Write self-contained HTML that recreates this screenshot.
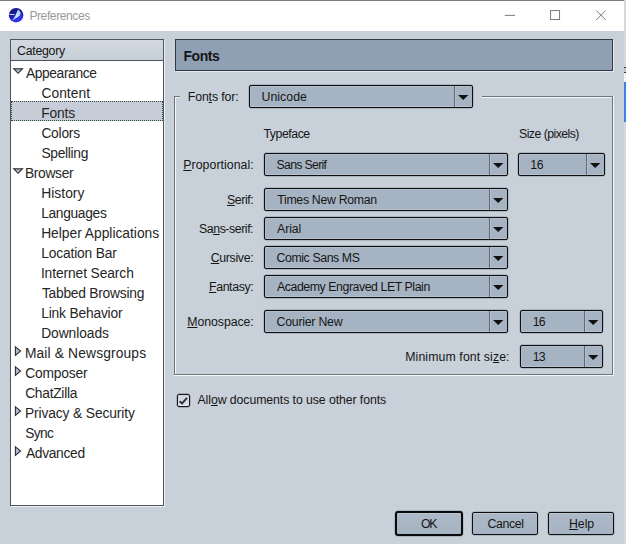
<!DOCTYPE html>
<html><head><meta charset="utf-8"><title>Preferences</title>
<style>
html,body{margin:0;padding:0}
body{width:626px;height:544px;overflow:hidden;background:#c8d0d9;position:relative;font-family:"Liberation Sans",sans-serif}
div,span,svg{position:absolute;box-sizing:border-box}
.t{white-space:pre;line-height:30px}
.t u{text-decoration:underline;text-underline-offset:0.5px;text-decoration-thickness:1px}
#topline{left:0;top:0;width:626px;height:1px;background:#7a7a7a}
#titlebar{left:0;top:1px;width:624px;height:30px;background:#fff}
#strip{left:624px;top:0;width:2px;height:544px;background:#d2d8e0}
#stripblue{left:624px;top:81.5px;width:2px;height:40.5px;background:#3f7fe6}
#tree{left:10px;top:39px;width:154px;height:467px;background:#fff;border:1px solid #4f545c;box-shadow:1px 1px 0 #eef1f4}
#cathead{left:1px;top:1px;width:152px;height:21px;background:linear-gradient(#d3d9e0,#c6ced7);border-bottom:1px solid #4f545c;left:0;top:0}
#sel{left:11px;top:101px;width:152px;height:20px;background:#c6cdd8;outline:1px dotted #2c4a36;outline-offset:-1px}
#hdrbox{left:175px;top:39px;width:438px;height:32px;background:#8fa0b4;border:1px solid #333a43;box-shadow:1px 1px 0 #e4e8ed}
.gb{background:#6e747c}
.gbl{background:#f4f6f8}
.dd{border:1px solid #0d0f13;border-radius:2px;background:#a6b3c2;box-shadow:inset 0 1px 0 #b3becb,inset 0 -1px 0 #b7c1cd,inset 1px 0 0 #b0bbc8,0 0 0 0.4px rgba(40,46,54,0.35)}
.dv{top:0;width:1px;height:100%;background:#5f6874}
.dv2{top:0;width:1px;height:100%;background:#b7c1cd}
.ar{overflow:visible}
.btn{border:1px solid #0d0f13;border-radius:2px;background:linear-gradient(#adb9c7,#a6b3c2);box-shadow:inset 0 1px 0 #bdc7d2,0 0 0 0.4px rgba(40,46,54,0.35)}
#ok{border:2px solid #090b0e;border-radius:3px}
#cb{left:177px;top:394px;width:13px;height:13px;border:1px solid #14171b;border-radius:2px;background:linear-gradient(#ccd3dc,#dde2e8);box-shadow:0 0 0 0.4px rgba(30,34,40,0.45)}
</style></head><body>
<div id="topline"></div>
<div id="titlebar"></div>
<div id="strip"></div><div style="left:624px;top:67px;width:2px;height:6px;background:#c4c4c4;border-top:1px solid #333;border-bottom:1px solid #333"></div><div style="left:624px;top:73px;width:2px;height:9px;background:#f4f4f4"></div><div id="stripblue"></div>
<svg style="left:8px;top:7px" width="17" height="17" viewBox="0 0 17 17">
<defs><linearGradient id="g" x1="0" y1="0" x2="0.35" y2="1"><stop offset="0" stop-color="#17176c"/><stop offset="0.5" stop-color="#1b1b9e"/><stop offset="1" stop-color="#2c30ea"/></linearGradient>
<linearGradient id="bd" x1="1" y1="0" x2="0" y2="1"><stop offset="0" stop-color="#8ec0fa"/><stop offset="0.5" stop-color="#cfe6ff"/><stop offset="1" stop-color="#7fb2f6"/></linearGradient></defs>
<circle cx="8.1" cy="8.15" r="7.25" fill="url(#g)"/>
<path d="M1.5 7.5 H6.4" stroke="#e9f1ff" stroke-width="0.9" fill="none"/>
<path d="M10.4 2.8 C11.5 3.4 12.3 4.8 12.8 6.4 C12.4 7.8 11.3 9 9.9 10 C8.3 11.2 6.3 12.6 4 13.5 C5.2 12.1 6.3 10.6 7.1 9 C7.9 7.3 8.5 5.7 9.1 4.4 C9.5 3.6 9.9 3 10.4 2.8 Z" fill="url(#bd)"/>
<path d="M13 7 C12.4 9.4 10 11.6 6 13.6 C8 13.8 12 12.6 14.6 9.4 Z" fill="#3a40f0" opacity="0.7"/>
</svg>
<!-- window controls -->
<svg style="left:500px;top:5px" width="112" height="20" viewBox="0 0 112 20">
<path d="M4.8 10.4 H15" stroke="#6c6c6c" stroke-width="0.9" fill="none"/>
<rect x="50.6" y="5.6" width="9" height="9" stroke="#6c6c6c" stroke-width="0.9" fill="none"/>
<path d="M96.2 5.4 L105.8 15 M105.8 5.4 L96.2 15" stroke="#6c6c6c" stroke-width="0.9" fill="none"/>
</svg>
<div id="tree"><div id="cathead"></div></div>
<div id="sel"></div>
<svg class="ar" style="left:12px;top:68px" width="12" height="7" viewBox="0 0 12 7"><defs><linearGradient id="tg" x1="0" y1="0" x2="0" y2="1"><stop offset="0" stop-color="#8f98a6"/><stop offset="1" stop-color="#dfe4ea"/></linearGradient></defs><path d="M1.7 0.7 L10.5 0.7 L6.1 5.3 Z" fill="url(#tg)" stroke="#2a2e34" stroke-width="1.1" stroke-linejoin="miter"/></svg>
<svg class="ar" style="left:12px;top:168px" width="12" height="7" viewBox="0 0 12 7"><defs><linearGradient id="tg" x1="0" y1="0" x2="0" y2="1"><stop offset="0" stop-color="#8f98a6"/><stop offset="1" stop-color="#dfe4ea"/></linearGradient></defs><path d="M1.7 0.7 L10.5 0.7 L6.1 5.3 Z" fill="url(#tg)" stroke="#2a2e34" stroke-width="1.1" stroke-linejoin="miter"/></svg>
<svg class="ar" style="left:14px;top:346px" width="8" height="11" viewBox="0 0 8 11"><path d="M1.4 0.9 L1.4 9.3 L6.6 5.1 Z" fill="#b4bccb" stroke="#2a2e34" stroke-width="1.1" stroke-linejoin="miter"/></svg>
<svg class="ar" style="left:14px;top:366px" width="8" height="11" viewBox="0 0 8 11"><path d="M1.4 0.9 L1.4 9.3 L6.6 5.1 Z" fill="#b4bccb" stroke="#2a2e34" stroke-width="1.1" stroke-linejoin="miter"/></svg>
<svg class="ar" style="left:14px;top:406px" width="8" height="11" viewBox="0 0 8 11"><path d="M1.4 0.9 L1.4 9.3 L6.6 5.1 Z" fill="#b4bccb" stroke="#2a2e34" stroke-width="1.1" stroke-linejoin="miter"/></svg>
<svg class="ar" style="left:14px;top:446px" width="8" height="11" viewBox="0 0 8 11"><path d="M1.4 0.9 L1.4 9.3 L6.6 5.1 Z" fill="#b4bccb" stroke="#2a2e34" stroke-width="1.1" stroke-linejoin="miter"/></svg>
<div id="hdrbox"></div>
<!-- groupbox -->
<div class="gb" style="left:174px;top:96px;width:1px;height:279px"></div>
<div class="gbl" style="left:175px;top:97px;width:1px;height:277px"></div>
<div class="gb" style="left:174px;top:96px;width:6px;height:1px"></div>
<div class="gbl" style="left:175px;top:97px;width:5px;height:1px"></div>
<div class="gb" style="left:482px;top:96px;width:131px;height:1px"></div>
<div class="gbl" style="left:482px;top:97px;width:130px;height:1px"></div>
<div class="gb" style="left:612px;top:96px;width:1px;height:278px"></div>
<div class="gbl" style="left:613px;top:96px;width:1px;height:280px"></div>
<div class="gb" style="left:174px;top:374px;width:439px;height:1px"></div>
<div class="gbl" style="left:174px;top:375px;width:440px;height:1px"></div>
<div class="dd" style="left:249px;top:85px;width:224px;height:23px"><div class="dv" style="left:204px"></div><div class="dv2" style="left:205px"></div></div><svg class="ar" style="left:458.30px;top:95.30px" width="10.4" height="5" viewBox="0 0 10.4 5"><path d="M0 0 L10.4 0 L5.2 5 Z" fill="#111"/></svg>
<div class="dd" style="left:264px;top:153px;width:244px;height:23px"><div class="dv" style="left:224px"></div><div class="dv2" style="left:225px"></div></div><svg class="ar" style="left:493.30px;top:163.30px" width="10.4" height="5" viewBox="0 0 10.4 5"><path d="M0 0 L10.4 0 L5.2 5 Z" fill="#111"/></svg>
<div class="dd" style="left:264px;top:188px;width:244px;height:23px"><div class="dv" style="left:224px"></div><div class="dv2" style="left:225px"></div></div><svg class="ar" style="left:493.30px;top:198.30px" width="10.4" height="5" viewBox="0 0 10.4 5"><path d="M0 0 L10.4 0 L5.2 5 Z" fill="#111"/></svg>
<div class="dd" style="left:264px;top:217px;width:244px;height:23px"><div class="dv" style="left:224px"></div><div class="dv2" style="left:225px"></div></div><svg class="ar" style="left:493.30px;top:227.30px" width="10.4" height="5" viewBox="0 0 10.4 5"><path d="M0 0 L10.4 0 L5.2 5 Z" fill="#111"/></svg>
<div class="dd" style="left:264px;top:246px;width:244px;height:23px"><div class="dv" style="left:224px"></div><div class="dv2" style="left:225px"></div></div><svg class="ar" style="left:493.30px;top:256.30px" width="10.4" height="5" viewBox="0 0 10.4 5"><path d="M0 0 L10.4 0 L5.2 5 Z" fill="#111"/></svg>
<div class="dd" style="left:264px;top:275px;width:244px;height:23px"><div class="dv" style="left:224px"></div><div class="dv2" style="left:225px"></div></div><svg class="ar" style="left:493.30px;top:285.30px" width="10.4" height="5" viewBox="0 0 10.4 5"><path d="M0 0 L10.4 0 L5.2 5 Z" fill="#111"/></svg>
<div class="dd" style="left:264px;top:310px;width:244px;height:23px"><div class="dv" style="left:224px"></div><div class="dv2" style="left:225px"></div></div><svg class="ar" style="left:493.30px;top:320.30px" width="10.4" height="5" viewBox="0 0 10.4 5"><path d="M0 0 L10.4 0 L5.2 5 Z" fill="#111"/></svg>
<div class="dd" style="left:518px;top:153px;width:87px;height:23px"><div class="dv" style="left:67px"></div><div class="dv2" style="left:68px"></div></div><svg class="ar" style="left:590.30px;top:163.30px" width="10.4" height="5" viewBox="0 0 10.4 5"><path d="M0 0 L10.4 0 L5.2 5 Z" fill="#111"/></svg>
<div class="dd" style="left:520px;top:310px;width:83px;height:23px"><div class="dv" style="left:63px"></div><div class="dv2" style="left:64px"></div></div><svg class="ar" style="left:588.30px;top:320.30px" width="10.4" height="5" viewBox="0 0 10.4 5"><path d="M0 0 L10.4 0 L5.2 5 Z" fill="#111"/></svg>
<div class="dd" style="left:520px;top:345px;width:83px;height:23px"><div class="dv" style="left:63px"></div><div class="dv2" style="left:64px"></div></div><svg class="ar" style="left:588.30px;top:355.30px" width="10.4" height="5" viewBox="0 0 10.4 5"><path d="M0 0 L10.4 0 L5.2 5 Z" fill="#111"/></svg>
<div id="cb"></div>
<svg style="left:177px;top:394px" width="13" height="13" viewBox="0 0 13 13"><path d="M2.6 7.3 L5.1 9.5 L10 3.9" stroke="#2a3038" stroke-width="1.9" fill="none"/></svg>
<div class="btn" id="ok" style="left:395px;top:511px;width:68px;height:25px"></div>
<div class="btn" style="left:472px;top:512px;width:66px;height:23px"></div>
<div class="btn" style="left:548px;top:512px;width:66px;height:23px"></div>
<span class="t" style="left:29.40px;top:0.60px;font-size:12.0px;font-weight:400;color:#999999;letter-spacing:-0.385px">Preferences</span>
<span class="t" style="left:17.10px;top:35.80px;font-size:12.3px;font-weight:400;color:#161616;letter-spacing:-0.264px">Category</span>
<span class="t" style="left:25.90px;top:59.00px;font-size:13.8px;font-weight:400;color:#262626;letter-spacing:-0.378px">Appearance</span>
<span class="t" style="left:41.40px;top:79.00px;font-size:13.8px;font-weight:400;color:#262626;letter-spacing:0.058px">Content</span>
<span class="t" style="left:41.15px;top:99.00px;font-size:13.8px;font-weight:400;color:#262626;letter-spacing:-0.100px">Fonts</span>
<span class="t" style="left:41.40px;top:119.00px;font-size:13.8px;font-weight:400;color:#262626;letter-spacing:-0.230px">Colors</span>
<span class="t" style="left:41.40px;top:139.00px;font-size:13.8px;font-weight:400;color:#262626;letter-spacing:-0.307px">Spelling</span>
<span class="t" style="left:24.90px;top:159.00px;font-size:13.8px;font-weight:400;color:#262626;letter-spacing:-0.317px">Browser</span>
<span class="t" style="left:41.15px;top:179.00px;font-size:13.8px;font-weight:400;color:#262626;letter-spacing:0.058px">History</span>
<span class="t" style="left:41.15px;top:199.00px;font-size:13.8px;font-weight:400;color:#262626;letter-spacing:-0.331px">Languages</span>
<span class="t" style="left:41.15px;top:219.00px;font-size:13.8px;font-weight:400;color:#262626;letter-spacing:-0.008px">Helper Applications</span>
<span class="t" style="left:41.15px;top:239.00px;font-size:13.8px;font-weight:400;color:#262626;letter-spacing:-0.150px">Location Bar</span>
<span class="t" style="left:40.90px;top:259.00px;font-size:13.8px;font-weight:400;color:#262626;letter-spacing:-0.100px">Internet Search</span>
<span class="t" style="left:41.90px;top:279.00px;font-size:13.8px;font-weight:400;color:#262626;letter-spacing:-0.243px">Tabbed Browsing</span>
<span class="t" style="left:41.15px;top:299.00px;font-size:13.8px;font-weight:400;color:#262626;letter-spacing:-0.179px">Link Behavior</span>
<span class="t" style="left:41.15px;top:319.00px;font-size:13.8px;font-weight:400;color:#262626;letter-spacing:-0.050px">Downloads</span>
<span class="t" style="left:24.90px;top:339.00px;font-size:13.8px;font-weight:400;color:#262626;letter-spacing:0.147px">Mail &amp; Newsgroups</span>
<span class="t" style="left:25.15px;top:359.00px;font-size:13.8px;font-weight:400;color:#262626;letter-spacing:-0.164px">Composer</span>
<span class="t" style="left:25.15px;top:379.00px;font-size:13.8px;font-weight:400;color:#262626;letter-spacing:-0.269px">ChatZilla</span>
<span class="t" style="left:24.90px;top:399.00px;font-size:13.8px;font-weight:400;color:#262626;letter-spacing:-0.112px">Privacy &amp; Security</span>
<span class="t" style="left:25.15px;top:419.00px;font-size:13.8px;font-weight:400;color:#262626;letter-spacing:-0.633px">Sync</span>
<span class="t" style="left:25.90px;top:439.00px;font-size:13.8px;font-weight:400;color:#262626;letter-spacing:-0.307px">Advanced</span>
<span class="t" style="left:183.50px;top:40.90px;font-size:14.0px;font-weight:700;color:#161616;letter-spacing:-0.450px">Fonts</span>
<span class="t" style="left:187.75px;top:82.00px;font-size:12.3px;font-weight:400;color:#161616;letter-spacing:-0.111px">Fon<u>t</u>s for:</span>
<span class="t" style="left:261.50px;top:82.00px;font-size:12.3px;font-weight:400;color:#161616;letter-spacing:0.042px">Unicode</span>
<span class="t" style="left:263.50px;top:119.00px;font-size:12.3px;font-weight:400;color:#161616;letter-spacing:-0.464px">Typeface</span>
<span class="t" style="left:519.00px;top:119.00px;font-size:12.3px;font-weight:400;color:#161616;letter-spacing:-0.542px">Size (pixels)</span>
<span class="t" style="left:183.25px;top:150.00px;font-size:12.3px;font-weight:400;color:#161616;letter-spacing:0.062px"><u>P</u>roportional:</span>
<span class="t" style="left:276.50px;top:149.75px;font-size:12.3px;font-weight:400;color:#161616;letter-spacing:-0.694px">Sans Serif</span>
<span class="t" style="left:530.25px;top:149.75px;font-size:12.3px;font-weight:400;color:#161616;letter-spacing:-0.250px">16</span>
<span class="t" style="left:227.00px;top:184.50px;font-size:12.3px;font-weight:400;color:#161616;letter-spacing:-0.400px"><u>S</u>erif:</span>
<span class="t" style="left:277.25px;top:184.75px;font-size:12.3px;font-weight:400;color:#161616;letter-spacing:-0.304px">Times New Roman</span>
<span class="t" style="left:199.00px;top:213.50px;font-size:12.3px;font-weight:400;color:#161616;letter-spacing:-0.425px">Sa<u>n</u>s-serif:</span>
<span class="t" style="left:277.00px;top:213.50px;font-size:12.3px;font-weight:400;color:#161616;letter-spacing:-0.062px">Arial</span>
<span class="t" style="left:210.75px;top:242.75px;font-size:12.3px;font-weight:400;color:#161616;letter-spacing:-0.321px"><u>C</u>ursive:</span>
<span class="t" style="left:276.50px;top:242.75px;font-size:12.3px;font-weight:400;color:#161616;letter-spacing:-0.396px">Comic Sans MS</span>
<span class="t" style="left:209.00px;top:271.75px;font-size:12.3px;font-weight:400;color:#161616;letter-spacing:-0.357px"><u>F</u>antasy:</span>
<span class="t" style="left:277.00px;top:272.00px;font-size:12.3px;font-weight:400;color:#161616;letter-spacing:-0.424px">Academy Engraved LET Plain</span>
<span class="t" style="left:187.25px;top:307.00px;font-size:12.3px;font-weight:400;color:#161616;letter-spacing:-0.056px"><u>M</u>onospace:</span>
<span class="t" style="left:276.50px;top:306.50px;font-size:12.3px;font-weight:400;color:#161616;letter-spacing:-0.225px">Courier New</span>
<span class="t" style="left:532.75px;top:306.50px;font-size:12.3px;font-weight:400;color:#161616;letter-spacing:-0.750px">16</span>
<span class="t" style="left:405.25px;top:341.75px;font-size:12.3px;font-weight:400;color:#161616;letter-spacing:0.103px">Minimum font si<u>z</u>e:</span>
<span class="t" style="left:532.75px;top:341.50px;font-size:12.3px;font-weight:400;color:#161616;letter-spacing:-0.750px">13</span>
<span class="t" style="left:197.50px;top:385.25px;font-size:12.3px;font-weight:400;color:#161616;letter-spacing:-0.083px">All<u>o</u>w documents to use other fonts</span>
<span class="t" style="left:421.10px;top:508.75px;font-size:12.3px;font-weight:400;color:#161616;letter-spacing:-1.400px">OK</span>
<span class="t" style="left:487.50px;top:508.75px;font-size:12.3px;font-weight:400;color:#161616;letter-spacing:-0.350px">Cancel</span>
<span class="t" style="left:569.00px;top:508.75px;font-size:12.3px;font-weight:400;color:#161616;letter-spacing:-0.050px"><u>H</u>elp</span>
</body></html>
